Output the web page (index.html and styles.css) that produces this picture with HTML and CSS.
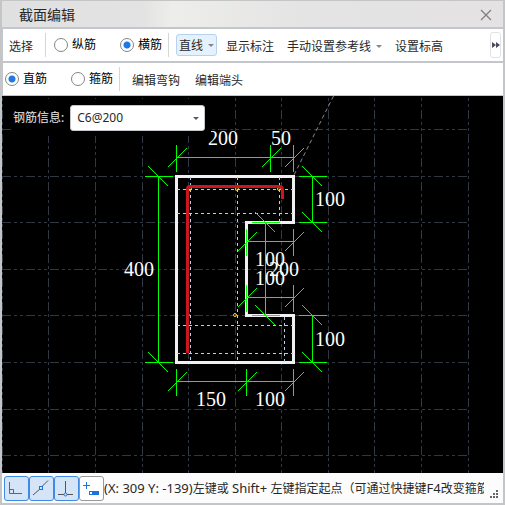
FILE: index.html
```html
<!DOCTYPE html>
<html lang="zh-CN">
<head>
<meta charset="utf-8">
<title>截面编辑</title>
<link rel="stylesheet" href="styles.css">
</head>
<body>
<div class="window">
  <header class="titlebar">
    <h1 class="title">截面编辑</h1>
    <button class="close" type="button" aria-label="关闭">
      <svg width="12" height="12" viewBox="0 0 12 12"><path d="M1 1L11 11M11 1L1 11"/></svg>
    </button>
  </header>

  <div class="toolbar toolbar-main">
    <button class="tool" type="button">选择</button>
    <span class="divider"></span>
    <div class="radios">
      <label class="radio"><input type="radio" name="direction">纵筋</label>
      <label class="radio"><input type="radio" name="direction" checked>横筋</label>
    </div>
    <span class="divider"></span>
    <div class="tools">
      <button class="tool active" type="button">直线<span class="caret"></span></button>
      <button class="tool" type="button">显示标注</button>
      <button class="tool" type="button">手动设置参考线<span class="caret"></span></button>
      <button class="tool" type="button">设置标高</button>
    </div>
    <button class="more" type="button" aria-label="更多">
      <svg width="8" height="6" viewBox="0 0 8 6"><path d="M0 0L4 3L0 6ZM4 0L8 3L4 6Z"/></svg>
    </button>
  </div>

  <div class="toolbar toolbar-sub">
    <div class="radios">
      <label class="radio"><input type="radio" name="shape" checked>直筋</label>
      <label class="radio"><input type="radio" name="shape">箍筋</label>
    </div>
    <span class="divider"></span>
    <div class="tools">
      <button class="tool" type="button">编辑弯钩</button>
      <button class="tool" type="button">编辑端头</button>
    </div>
  </div>

  <main class="canvas">
    <svg class="drawing">
      <defs>
        <path id="slash" d="M-9 10L10 -9"/>
        <path id="backslash" d="M-10 -10L10 10"/>
        <g id="tick-v"><path d="M0 -13V14"/><use href="#slash"/></g>
        <g id="tick-h"><path d="M-14 0H14"/><use href="#backslash"/></g>
      </defs>
      <g transform="translate(-2 -96)">
        <g class="grid">
          <path d="M2.5 86V480M48.5 86V480M95.5 86V480M142.5 86V480M188.5 86V480M235.5 86V480M281.5 86V480M328.5 86V480M374.5 86V480M421.5 86V480M468.5 86V480"/>
          <path d="M2 129.5H468M2 176.5H468M2 222.5H468M2 269.5H468M2 315.5H468M2 362.5H468M2 409.5H468M2 455.5H468"/>
        </g>
        <path class="tracking" d="M333.5 96L294 175"/>
        <path class="outline" d="M176.5 176.5H293.5V222.5H246.5V315.5H293.5V362.5H176.5Z"/>
        <g class="guides">
          <path d="M190.5 177V362M237.5 177V362M279.5 177V222M284.5 317V362"/>
          <path d="M177 189.5H293M177 213.5H293M177 325.5H293M177 353.5H293"/>
        </g>
        <g class="points">
          <circle cx="190" cy="189" r="1.5"/><circle cx="237" cy="189" r="1.5"/><circle cx="279" cy="189" r="1.5"/>
          <circle cx="235" cy="315" r="1.5"/><circle cx="189" cy="315" r="0.5"/>
        </g>
        <path class="rebar" d="M187.5 353V189Q187.5 186.5 190 186.5H279Q282.5 186.5 282.5 190V199"/>
        <g class="dims">
          <path d="M176.5 157.5H293.5M176.5 381.5H293.5M246.5 241.5H293.5M246.5 297.5H293.5"/>
          <path d="M158.5 176.5V362.5M312.5 176.5V222.5M312.5 315.5V362.5M265.5 222.5V315.5"/>
          <use href="#tick-v" x="176.5" y="157.5"/><use href="#tick-v" x="270.5" y="157.5"/><use href="#tick-v" x="293.5" y="157.5"/>
          <use href="#tick-v" x="176.5" y="381.5"/><use href="#tick-v" x="246.5" y="381.5"/><use href="#tick-v" x="293.5" y="381.5"/>
          <use href="#tick-v" x="246.5" y="241.5"/><use href="#tick-v" x="293.5" y="241.5"/>
          <use href="#tick-v" x="246.5" y="297.5"/><use href="#tick-v" x="293.5" y="297.5"/>
          <use href="#tick-h" x="158.5" y="176.5"/><use href="#tick-h" x="158.5" y="362.5"/>
          <use href="#tick-h" x="312.5" y="176.5"/><use href="#tick-h" x="312.5" y="222.5"/>
          <use href="#tick-h" x="312.5" y="315.5"/><use href="#tick-h" x="312.5" y="362.5"/>
          <use href="#tick-h" x="265.5" y="222.5"/><use href="#tick-h" x="265.5" y="315.5"/>
        </g>
        <g class="dim-text">
          <text x="208" y="145">200</text><text x="271" y="145">50</text>
          <text x="315" y="206">100</text><text x="315" y="346">100</text>
          <text x="124" y="276">400</text>
          <text x="196" y="406">150</text><text x="255" y="406">100</text>
          <text x="255" y="266">100</text><text x="255" y="285">100</text><text x="269" y="276">200</text>
        </g>
      </g>
    </svg>
    <div class="rebar-info">
      <label for="rebar">钢筋信息:</label>
      <div class="combo">
        <select id="rebar"><option>C6@200</option></select>
        <span class="caret"></span>
      </div>
    </div>
  </main>

  <footer class="statusbar">
    <div class="snaps">
      <button class="snap on" type="button" aria-label="正交">
        <svg width="23" height="23" viewBox="0 0 23 23"><path class="blue" d="M4.500 5V16.500H17M4.500 12.500H8.500V16.500"/></svg>
      </button>
      <button class="snap on" type="button" aria-label="中点">
        <svg width="23" height="23" viewBox="0 0 23 23"><path class="dark" d="M3 18L10 12M12 9.500L18 3.500"/><rect class="blue" x="9.500" y="9.500" width="3" height="3"/></svg>
      </button>
      <button class="snap on" type="button" aria-label="垂足">
        <svg width="23" height="23" viewBox="0 0 23 23"><path class="dark" d="M10.500 4V16M3 17.500H9M12 17.500H18"/><circle class="blue" cx="10.500" cy="17.500" r="1.500"/></svg>
      </button>
      <button class="snap" type="button" aria-label="动态输入">
        <svg width="23" height="23" viewBox="0 0 23 23"><path class="blue" d="M3 8.500H10M6.500 5V12"/><path class="solid" d="M9 14H19V18H9ZM10 15V17H12V15Z" fill-rule="evenodd"/></svg>
      </button>
    </div>
    <output class="message"><span class="latin">(X: 309 Y: -139)</span>左键或<span class="latin"> Shift+ </span>左键指定起点（可通过快捷键<span class="latin">F4</span>改变箍筋</output>
    <svg class="grip" width="9" height="9" viewBox="0 0 9 9"><path d="M6 0h2v2h-2zM3 3h2v2h-2zM6 3h2v2h-2zM0 6h2v2h-2zM3 6h2v2h-2zM6 6h2v2h-2z"/></svg>
  </footer>
</div>
</body>
</html>
```
FILE: styles.css
```css
* { box-sizing: border-box; }

body {
  margin: 0;
  font: 12px/18px "Noto Sans", "Noto Sans CJK SC", sans-serif;
  color: #282828;
}

button, select {
  font: inherit;
  color: inherit;
  margin: 0;
  padding: 0;
  border: 0;
  background: none;
}

svg { display: block; }

.window {
  display: flex;
  flex-direction: column;
  min-height: 100vh;
  border: 2px solid #c4c5c7;
  border-top-width: 1px;
  background: #fff;
}

.titlebar {
  display: flex;
  align-items: center;
  justify-content: space-between;
  height: 28px;
  padding: 2px 11px 0 17px;
  border-bottom: 2px solid #c3c6cb;
  background: linear-gradient(90deg, #e0e0e0, #e3e3e3 28%, #ededeb 34%, #e5e4e4 60%, #e4e2e2);
}

.title {
  margin: 0;
  font-size: 14px;
  font-weight: 400;
}

.close path { stroke: #808080; stroke-width: 1.3; fill: none; }

.toolbar {
  display: flex;
  align-items: center;
  border-left: 1px solid #c3c6cb;
}

.toolbar-main { height: 34px; border-bottom: 2px solid #c3c6cb; padding: 0 2px 0 6px; }
.toolbar-sub { height: 33px; border-bottom: 1px solid #c3c6cb; padding-left: 2px; }

.tool {
  display: flex;
  align-items: center;
  height: 22px;
  padding-top: 3px;
  white-space: nowrap;
}

.tool.active {
  padding: 1px 2px 0;
  border: 1px solid #b5d3f0;
  border-radius: 3px;
  background: #e5f1fc;
}

.caret {
  border: 3px solid transparent;
  border-top-color: #858585;
  border-bottom: 0;
  margin-left: 5px;
}

.divider { width: 1px; height: 24px; background: #d5d5d5; }
.toolbar-main .divider:first-of-type { margin-left: 12px; }

.radios { display: flex; margin: 0 6px 0 8px; gap: 24px; color: #000; padding-bottom: 1px; }
.toolbar-sub .radios { margin-left: 0; }

.radio { display: flex; align-items: center; gap: 4px; }

.radio input {
  appearance: none;
  width: 14px;
  height: 14px;
  margin: 0;
  border: 1px solid #858585;
  border-radius: 50%;
  background: #fff;
}

.radio input:checked { background: radial-gradient(circle, #2379e2 3px, #fff 4px); }

.tools { display: flex; align-items: center; }
.toolbar-main .tools { margin-left: 7px; column-gap: 13px; }
.toolbar-main .tool.active { margin-right: -4px; }
.toolbar-sub .tools { gap: 15px; margin-left: 12px; }

.more {
  display: grid;
  place-items: center;
  width: 11px;
  height: 26px;
  margin-left: auto;
  border: 1px solid #e2e2e6;
  border-radius: 3px;
}

.more path { fill: #454b5c; }

.canvas {
  position: relative;
  display: flex;
  flex: 1;
  overflow: hidden;
  background: #000;
}

.drawing { flex: 1; width: 100%; }
.drawing path, .drawing circle { fill: none; }
.grid path { stroke: #303742; stroke-dasharray: 9 3 3 3 3 3; }
.tracking { stroke: #888; stroke-dasharray: 4 3; }
.outline { stroke: #f2f0f2; stroke-width: 3; }
.guides { stroke: #b4d0f0; stroke-dasharray: 3 3; }
.points { stroke: #f0d030; }
.rebar { stroke: #cc151e; stroke-width: 3; }
.dims { stroke: #00ff00; shape-rendering: crispEdges; }
.dim-text { fill: #fff; font: 20px "Liberation Serif", serif; }

.rebar-info {
  position: absolute;
  top: 3px;
  left: 10px;
  display: flex;
  align-items: center;
  gap: 6px;
  padding: 6px 6px 5px 1px;
  background: #000;
  color: #e8e8e8;
}

.combo { position: relative; }

.combo select {
  appearance: none;
  display: block;
  width: 135px;
  height: 26px;
  padding: 0 6px;
  border: 1px solid #c4c7cb;
  border-radius: 3px;
  background: #fff;
  color: #282828;
}

.combo .caret {
  position: absolute;
  right: 6px;
  top: 12px;
  border-top-color: #555b66;
  pointer-events: none;
}

.statusbar {
  display: flex;
  align-items: center;
  height: 30px;
  padding: 0 4px 0 2px;
  background: #fcfcfc;
}

.snaps { display: flex; }

.snap {
  width: 25px;
  height: 25px;
  border: 1px solid #999;
  border-radius: 3px;
  background: #fff;
}

.snap.on { border-color: #3d8be6; background: #d6e4f8; }

.snap .blue { fill: none; stroke: #1b73dc; }
.snap .dark { fill: none; stroke: #555; }
.snap .solid { fill: #1b73dc; }

.message {
  flex: 1;
  min-width: 0;
  overflow: hidden;
  white-space: nowrap;
}

.latin { font-size: 13px; }

.grip { margin: 12px 0 0 6px; fill: #666; }
```
